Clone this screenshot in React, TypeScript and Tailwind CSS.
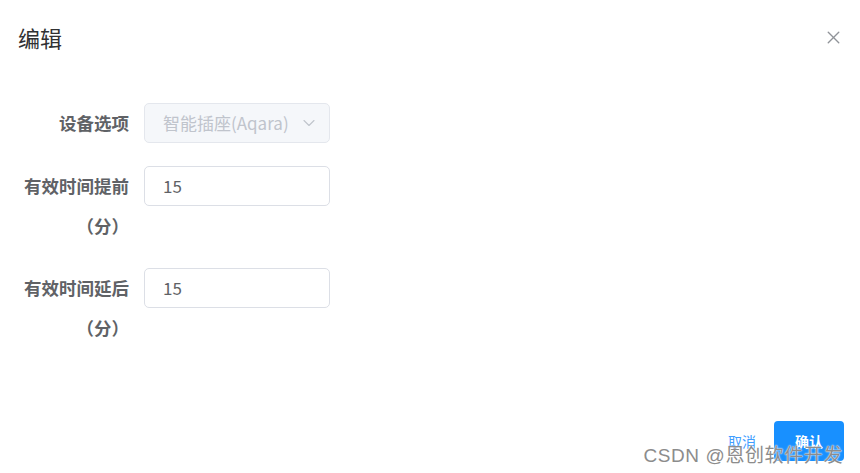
import { X, ChevronDown } from "lucide-react";

const FONT = { fontFamily: '"Noto Sans CJK SC", "Noto Sans", sans-serif' };

function FormItem({ label, gap, children }: { label: string; gap: string; children: React.ReactNode }) {
  return (
    <div className={`flex items-start ${gap}`}>
      <label className="w-[144px] shrink-0 pl-[20px] pr-[15px] text-right text-[17.5px] font-bold leading-[40px] text-[#606266]">
        {label}
      </label>
      {children}
    </div>
  );
}

function TextInput({ value }: { value: string }) {
  return (
    <div className="flex h-[40px] w-[186px] items-center rounded-[5px] border border-[#dcdfe6] bg-white pl-[18px] text-[17px] text-[#606266]">
      {value}
    </div>
  );
}

export default function App() {
  return (
    <div className="relative flex h-[473px] w-[860px] flex-col bg-white" style={FONT}>
      <div className="flex items-center justify-between pl-[18px] pr-[16px] pt-[22px]">
        <span className="text-[22px] leading-[30px] text-[#303133]">编辑</span>
        <X className="size-[21px] text-[#909399]" strokeWidth={1.6} />
      </div>

      <div className="mt-[51px]">
        <FormItem label="设备选项" gap="mb-[23px]">
          <div className="flex h-[40px] w-[186px] items-center justify-between rounded-[5px] border border-[#e4e7ed] bg-[#f5f7fa] pl-[18px] pr-[10px] text-[17px] text-[#c0c4cc]">
            <span>智能插座(Aqara)</span>
            <ChevronDown className="size-[20px] text-[#c0c4cc]" strokeWidth={1.3} />
          </div>
        </FormItem>
        <FormItem label="有效时间提前（分）" gap="mb-[22px]">
          <TextInput value="15" />
        </FormItem>
        <FormItem label="有效时间延后（分）" gap="mb-[22px]">
          <TextInput value="15" />
        </FormItem>
      </div>

      <div className="mt-auto flex items-center justify-end gap-[18px] pb-[12px] pr-[16px]">
        <button className="text-[14px] text-[#409eff]">取消</button>
        <button className="h-[40px] w-[70px] rounded-[4px] bg-[#1890ff] text-[14px] font-bold text-white">
          确认
        </button>
      </div>

      <span
        className="absolute bottom-[6px] right-[17px] text-[19px] leading-[22px] tracking-[0.6px] text-[#8c8c8c]"
        style={{
          fontFamily: '"Liberation Sans", "Noto Sans CJK SC", sans-serif',
          textShadow: "0 0 1px #fff, 0 0 2px #fff",
        }}
      >
        CSDN @恩创软件开发
      </span>
    </div>
  );
}
